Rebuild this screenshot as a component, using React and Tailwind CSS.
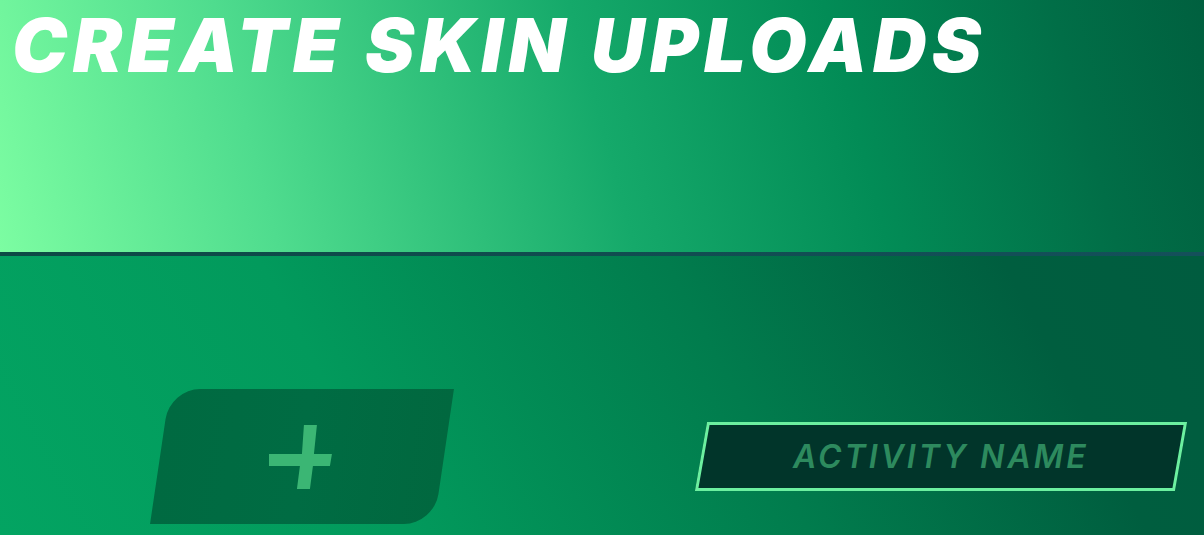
export default function App() {
  return (
    <div className="w-[1204px] h-[535px] overflow-hidden flex flex-col" style={{ fontFamily: "Inter, 'Open Sans', sans-serif" }}>
      <div className="h-[252px] bg-[linear-gradient(75deg,#7cfda2_0%,#4fdc8e_22%,#15a96a_50%,#028c56_70%,#016e47_88%,#00603f_100%)] px-[12px] pt-[2px]">
        <h1 className="text-white italic font-black text-[74px] leading-[86px] tracking-[5.5px] whitespace-nowrap">
          CREATE SKIN UPLOADS
        </h1>
      </div>
      <div className="h-[4px] bg-[linear-gradient(90deg,#0d4a45,#14505a)]" />
      <div className="flex-1 bg-[linear-gradient(62deg,#03a462_0%,#029a5c_30%,#017c4d_60%,#005e3f_85%,#005c3f_100%)] flex items-center pt-[133px] pb-[11px]">
        <div className="ml-[160px] w-[284px] h-[135px] bg-[linear-gradient(90deg,#006a41,#006c43_50%,#01683f)] rounded-tl-[30px] rounded-br-[30px] skew-x-[-8.4deg] flex items-center justify-center">
          <svg width="66" height="66" viewBox="0 0 66 66" className="skew-x-[8.4deg]">
            <path d="M38 1 L51 1 L48 30 L66 30 L64 42 L47 42 L44 65 L31 65 L34 42 L0 42 L2 30 L36 30 Z" fill="#3bb674" transform="translate(-3 0)" />
          </svg>
        </div>
        <div className="ml-[257px] w-[480px] h-[69px] border-[3px] border-[#6cf0a0] bg-[#01352a] skew-x-[-10deg] flex items-center justify-center">
          <span className="skew-x-[10deg] italic font-semibold text-[32px] text-[#2d8a5e] tracking-[3px] whitespace-nowrap">
            ACTIVITY NAME
          </span>
        </div>
      </div>
    </div>
  );
}
